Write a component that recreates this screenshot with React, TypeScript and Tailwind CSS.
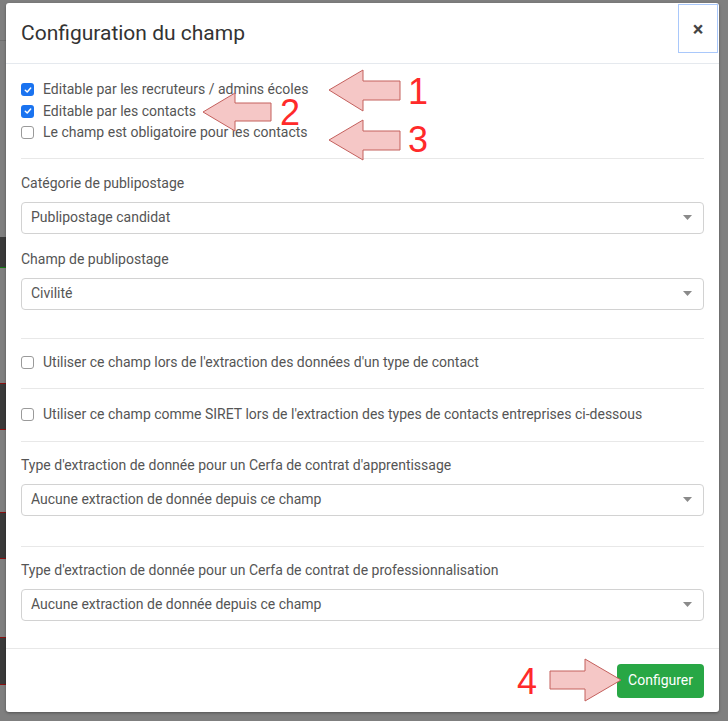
import React from 'react';

const font = { fontFamily: 'Roboto, "Liberation Sans", sans-serif' };

const Check = ({ checked }: { checked?: boolean }) =>
  checked ? (
    <span className="flex h-[13px] w-[13px] flex-shrink-0 items-center justify-center rounded-[3px] bg-[#1a73f0]">
      <svg width="8" height="8" viewBox="0 0 8 8">
        <path d="M1.3 4.2 L3.2 6 L6.7 2" fill="none" stroke="#fff" strokeWidth="1.5" strokeLinecap="round" strokeLinejoin="round" />
      </svg>
    </span>
  ) : (
    <span className="h-[13px] w-[13px] flex-shrink-0 rounded-[3px] border border-[#9a9a9a] bg-white" />
  );

const CheckRow = ({ label, checked }: { label: string; checked?: boolean }) => (
  <label className="flex h-[21.5px] items-center gap-[9px] text-[14px] text-[#555]">
    <Check checked={checked} />
    <span>{label}</span>
  </label>
);

const Select = ({ value }: { value: string }) => (
  <div className="flex h-[32px] items-center justify-between rounded-[4px] border border-[#d2d2d2] bg-white pl-[9px] pr-[11px] text-[14px] text-[#555]">
    <span>{value}</span>
    <svg width="9" height="5" viewBox="0 0 9 5">
      <path d="M0 0 H9 L4.5 5 Z" fill="#8a8a8a" />
    </svg>
  </div>
);

const Field = ({ label, value }: { label: string; value: string }) => (
  <div>
    <div className="mb-[9px] h-[20px] text-[14px] leading-[20px] text-[#555]">{label}</div>
    <Select value={value} />
  </div>
);

const Divider = () => <div className="h-px bg-[#e8e8e8]" />;

// fake page behind the overlay (only a sliver on the left shows)
const BehindPage = () => (
  <div className="h-full w-[20px]">
    <div className="h-[41px] border-b border-[#6f6f6f]" />
    <div className="h-[196px]" />
    <div className="h-[31px] border-b border-[#137a13] bg-[#3a3a3a]" />
    <div className="h-[115px]" />
    <div className="h-[47px] border-y border-[#8a1010] bg-[#3a3a3a]" />
    <div className="h-[82px]" />
    <div className="h-[47px] border-y border-[#8a1010] bg-[#3a3a3a]" />
    <div className="h-[78px]" />
    <div className="h-[48px] border-y border-[#8a1010] bg-[#3a3a3a]" />
  </div>
);

const Arrows = () => (
  <svg className="pointer-events-none absolute left-0 top-0" width="728" height="721">
    <g fill="#f5c7c6" stroke="#c4605d" strokeWidth="1">
      <polygon points="329,90 363,70 363,81 400,81 400,100 363,100 363,111" />
      <polygon points="203,112 235,93 235,103 271,103 271,121 235,121 235,131" />
      <polygon points="329,140 363,120 363,131 400,131 400,150 363,150 363,160" />
      <polygon points="621,680 585,659 585,671 550,671 550,689 585,689 585,701" />
    </g>
    <g fill="#ff2a2a" fontSize="36" style={{ fontFamily: '"Liberation Sans", Arial, sans-serif' }}>
      <text x="408" y="104">1</text>
      <text x="280" y="125">2</text>
      <text x="408" y="152">3</text>
      <text x="517" y="694">4</text>
    </g>
  </svg>
);

export default function App() {
  return (
    <div className="relative h-[721px] w-[728px] overflow-hidden bg-[#7f7f7f]" style={font}>
      <BehindPage />

      {/* modal */}
      <div className="absolute left-[6px] top-[3px] flex h-[709px] w-[713px] flex-col rounded-[3px] bg-white shadow-[0_1px_3px_rgba(0,0,0,0.35)]">
        <div className="flex h-[61px] items-start justify-between border-b border-[#e5e9ee] pl-[15px]">
          <h1 className="mt-[16px] text-[21px] leading-[28px] text-[#333]">Configuration du champ</h1>
          <button className="mr-px mt-px flex h-[49px] w-[40px] items-center justify-center border border-[#a9c8fb] text-[20px] font-bold leading-none text-[#444]">
            ×
          </button>
        </div>

        <div className="flex flex-1 flex-col px-[15px] pt-[15px]">
          <div className="flex flex-col">
            <CheckRow checked label="Editable par les recruteurs / admins écoles" />
            <CheckRow checked label="Editable par les contacts" />
            <CheckRow label="Le champ est obligatoire pour les contacts" />
          </div>
          <div className="my-[14px]">
            <Divider />
          </div>
          <Field label="Catégorie de publipostage" value="Publipostage candidat" />
          <div className="mt-[15px]">
            <Field label="Champ de publipostage" value="Civilité" />
          </div>
          <div className="mb-[13px] mt-[28px]">
            <Divider />
          </div>
          <CheckRow label="Utiliser ce champ lors de l'extraction des données d'un type de contact" />
          <div className="my-[15px]">
            <Divider />
          </div>
          <CheckRow label="Utiliser ce champ comme SIRET lors de l'extraction des types de contacts entreprises ci-dessous" />
          <div className="mb-[13px] mt-[15px]">
            <Divider />
          </div>
          <Field label="Type d'extraction de donnée pour un Cerfa de contrat d'apprentissage" value="Aucune extraction de donnée depuis ce champ" />
          <div className="mb-[13px] mt-[30px]">
            <Divider />
          </div>
          <Field label="Type d'extraction de donnée pour un Cerfa de contrat de professionnalisation" value="Aucune extraction de donnée depuis ce champ" />
        </div>

        <div className="flex h-[64px] items-center justify-end border-t border-[#e8e8e8] px-[15px]">
          <button className="h-[34px] rounded-[4px] bg-[#28a745] px-[11px] text-[14px] text-white">Configurer</button>
        </div>
      </div>

      <Arrows />
    </div>
  );
}
